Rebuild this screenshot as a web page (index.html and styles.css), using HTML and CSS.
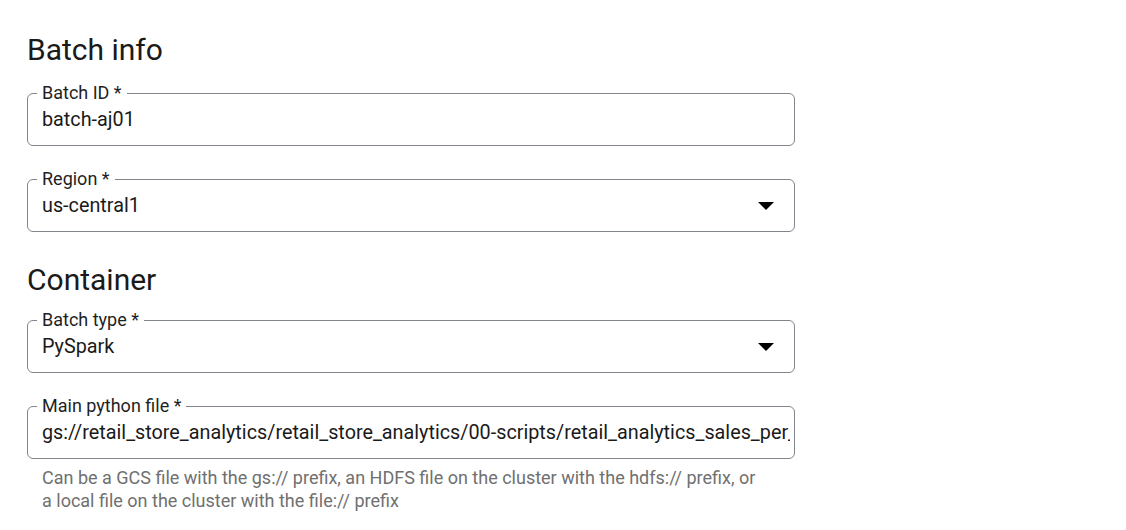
FILE: index.html
```html
<!DOCTYPE html>
<html>
<head>
<meta charset="utf-8">
<link rel="stylesheet" href="styles.css">
</head>
<body>
<main class="form">
  <h2 class="section-title">Batch info</h2>
  <fieldset class="field">
    <legend class="field-label">Batch ID *</legend>
    <div class="field-row"><div class="field-value">batch-aj01</div></div>
  </fieldset>
  <fieldset class="field">
    <legend class="field-label">Region *</legend>
    <div class="field-row"><div class="field-value">us-central1</div><span class="arrow"></span></div>
  </fieldset>

  <h2 class="section-title section-title-2">Container</h2>
  <fieldset class="field">
    <legend class="field-label">Batch type *</legend>
    <div class="field-row"><div class="field-value">PySpark</div><span class="arrow"></span></div>
  </fieldset>
  <fieldset class="field field-last">
    <legend class="field-label">Main python file *</legend>
    <div class="field-row"><div class="field-value">gs://retail_store_analytics/retail_store_analytics/00-scripts/retail_analytics_sales_per_store.py</div></div>
  </fieldset>
  <p class="helper">Can be a GCS file with the gs:// prefix, an HDFS file on the cluster with the hdfs:// prefix, or a local file on the cluster with the file:// prefix</p>
</main>
</body>
</html>
```

FILE: styles.css
```css
html, body {
  margin: 0;
  padding: 0;
  background: #ffffff;
}
body {
  font-family: Roboto, "Liberation Sans", sans-serif;
  color: #1f1f1f;
}
.form {
  width: 768px;
  padding: 32px 0 0 27px;
}
.section-title {
  margin: 0 0 15px 0;
  font-size: 30px;
  line-height: 36px;
  font-weight: 400;
  color: #1a1a1a;
}
.section-title-2 {
  margin-top: 30px;
  margin-bottom: 12px;
}
.field {
  display: block;
  margin: 0 0 23px 0;
  padding: 5px 4px 13px 14px;
  border: 1px solid #80868b;
  border-radius: 6px;
  min-width: 0;
}
.field-last {
  margin-bottom: 0;
}
.field-label {
  padding: 0 5px;
  margin-left: -5px;
  font-size: 18px;
  line-height: 20px;
  color: #1f1f1f;
}
.field-row {
  display: flex;
  align-items: center;
  height: 24px;
}
.field-value {
  flex: 1;
  min-width: 0;
  font-size: 19.8px;
  line-height: 24px;
  white-space: nowrap;
  overflow: hidden;
  color: #1a1a1a;
}
.arrow {
  width: 0;
  height: 0;
  border-left: 8px solid transparent;
  border-right: 8px solid transparent;
  border-top: 8px solid #000;
  margin-right: 16px;
}
.helper {
  margin: 7px 0 0 0;
  padding: 0 30px 0 15px;
  font-size: 18px;
  line-height: 23px;
  color: #707070;
}
```
